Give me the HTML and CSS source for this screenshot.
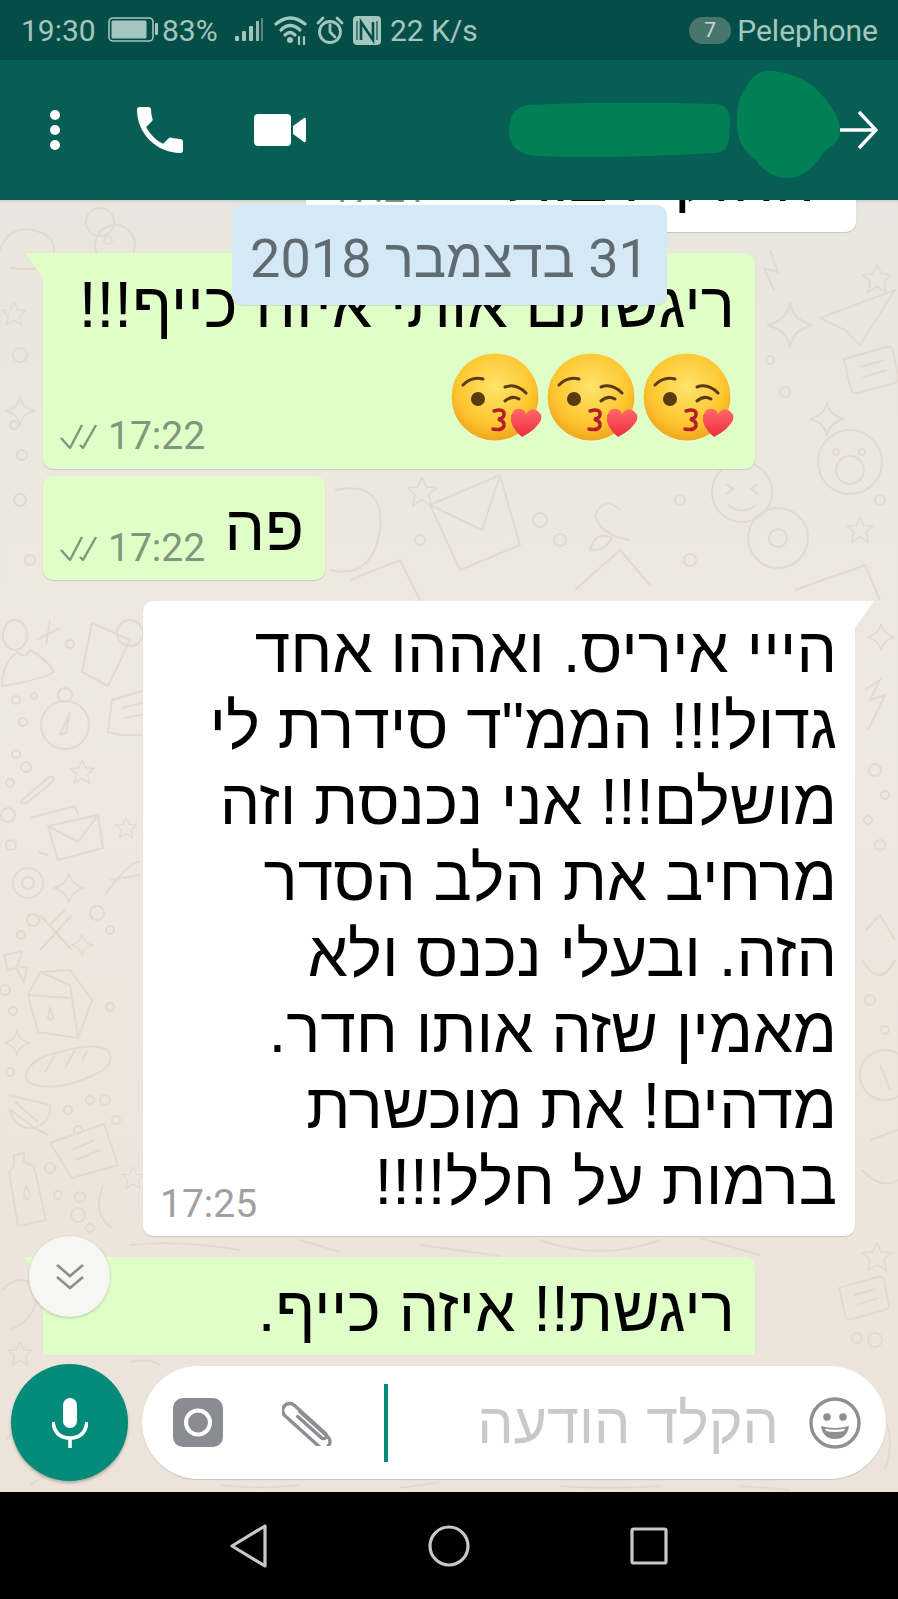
FILE: index.html
```html
<!DOCTYPE html>
<html lang="he">
<head>
  <meta charset="utf-8">
  <link rel="stylesheet" href="styles.css">
</head>
<body>
  <svg class="defs" width="0" height="0">
    <defs>
      <radialGradient id="faceFill" cx="50%" cy="38%" r="62%">
        <stop offset="0" stop-color="#ffe36a"/>
        <stop offset="0.7" stop-color="#fdc62f"/>
        <stop offset="1" stop-color="#f3a41c"/>
      </radialGradient>
      <linearGradient id="heartFill" x1="0" y1="0" x2="0" y2="1">
        <stop offset="0" stop-color="#ff6a6a"/>
        <stop offset="1" stop-color="#ee2d3d"/>
      </linearGradient>
      <symbol id="kiss" viewBox="0 0 92 90">
        <circle cx="44" cy="45" r="43.500" fill="url(#faceFill)"/>
        <path d="M12 33 Q21 24 32 27" fill="none" stroke="#5b3b12" stroke-width="3" stroke-linecap="round"/>
        <path d="M54 35 Q65 31 75 41" fill="none" stroke="#5b3b12" stroke-width="3" stroke-linecap="round"/>
        <path d="M54 49 Q61 43 68 47" fill="none" stroke="#5b3b12" stroke-width="3" stroke-linecap="round"/>
        <circle cx="27" cy="47" r="7" fill="#5b3b12"/>
        <path d="M43 59 Q54 56 53 63 Q52 67 47 67 Q54 69 53 74 Q51 79 42 77" fill="none" stroke="#b3202c" stroke-width="3.500" stroke-linecap="round"/>
        <path d="M71 85 Q58 74 60 64 Q63 55 70 57 Q74 58 75 62 Q79 56 85 58 Q92 62 90 68 Q86 77 71 85 Z" fill="url(#heartFill)"/>
      </symbol>
      <symbol id="ticks" viewBox="0 0 38 25">
        <path d="M1 14 L10 24 L22 1 M20 21 L23 24 L36 1" fill="none" stroke="#82967a" stroke-width="2.400" stroke-linejoin="round"/>
      </symbol>
      <symbol id="star5" viewBox="0 0 40 40" overflow="visible">
        <path d="M20 3 L25 14 L37 15 L28 23 L31 36 L20 29 L9 36 L12 23 L3 15 L15 14 Z" stroke-linejoin="round"/>
      </symbol>
      <symbol id="star4" viewBox="0 0 40 40" overflow="visible">
        <path d="M20 2 Q22 16 38 20 Q22 24 20 38 Q18 24 2 20 Q18 16 20 2 Z"/>
      </symbol>
      <symbol id="card" viewBox="0 0 60 50" overflow="visible">
        <path d="M4 14 L46 2 Q52 1 53 6 L58 32 Q59 36 54 38 L18 48 Q13 49 11 45 Z"/>
        <path d="M20 22 L44 15 M23 32 L47 25"/>
      </symbol>
    </defs>
  </svg>

  <div class="screen">
    <div class="status-bar">
      <span class="clock">19:30</span>
      <svg class="ic-battery" width="50" height="26" viewBox="0 0 50 26">
        <rect x="1" y="1" width="44" height="23" rx="4" fill="none" stroke="#a3c6bf" stroke-width="1.600"/>
        <rect x="3.500" y="3.500" width="35" height="18" rx="1.500" fill="#a3c6bf"/>
        <rect x="47" y="6" width="3" height="12" rx="1" fill="#a3c6bf"/>
      </svg>
      <span class="battery-pct">83%</span>
      <svg class="ic-signal" width="28" height="24" viewBox="0 0 28 24" fill="#a3c6bf">
        <rect x="0" y="18" width="4" height="5" rx="1"/>
        <rect x="7" y="13" width="4" height="10" rx="1"/>
        <rect x="14" y="8" width="4" height="15" rx="1"/>
        <rect x="21" y="3" width="3" height="20" opacity="0.9"/>
        <rect x="26" y="0" width="2" height="23" opacity="0.5"/>
      </svg>
      <svg class="ic-wifi" width="33" height="30" viewBox="0 0 33 30" fill="none" stroke="#a3c6bf" stroke-width="3.200" stroke-linecap="round">
        <path d="M2 9 Q16 -3 31 9"/>
        <path d="M7 15 Q16 6 26 15"/>
        <path d="M11 20 Q16 15 21 20"/>
        <circle cx="16" cy="25" r="3" fill="#a3c6bf" stroke="none"/>
        <path d="M25 22 L25 29 M30 22 L30 29" stroke-width="2.200"/>
      </svg>
      <svg class="ic-alarm" width="28" height="29" viewBox="0 0 28 29" fill="none" stroke="#a3c6bf" stroke-width="2.800">
        <circle cx="14" cy="16" r="10.500"/>
        <path d="M14 9 V16 L19 21" stroke-linecap="round"/>
        <path d="M2 7 L7 2 M26 7 L21 2" stroke-linecap="round"/>
      </svg>
      <svg class="ic-nfc" width="28" height="29" viewBox="0 0 28 29">
        <rect width="28" height="29" rx="4" fill="#a3c6bf"/>
        <path d="M8 24 V6 L20 24 V6" fill="none" stroke="#054e47" stroke-width="2.600"/>
        <path d="M4 5 V24 M24 5 V24" fill="none" stroke="#054e47" stroke-width="1.200"/>
      </svg>
      <span class="speed">22 K/s</span>
      <span class="sim-badge">7</span>
      <span class="carrier">Pelephone</span>
    </div>

    <div class="top-bar">
      <svg class="ic-dots" width="12" height="40" viewBox="0 0 12 40" fill="#fff">
        <circle cx="6" cy="5" r="5"/>
        <circle cx="6" cy="20" r="5"/>
        <circle cx="6" cy="35" r="5"/>
      </svg>
      <svg class="ic-phone" width="46" height="46" viewBox="3 3 18 18" fill="#fff">
        <path d="M6.62 10.79c1.44 2.83 3.76 5.14 6.59 6.59l2.2-2.2c.27-.27.67-.36 1.02-.24 1.12.37 2.33.57 3.57.57.55 0 1 .45 1 1V20c0 .55-.45 1-1 1-9.39 0-17-7.61-17-17 0-.55.45-1 1-1h3.5c.55 0 1 .45 1 1 0 1.25.2 2.45.57 3.57.11.35.03.74-.25 1.02l-2.2 2.2z"/>
      </svg>
      <svg class="ic-video" width="52" height="32" viewBox="0 0 52 32" fill="#fff">
        <rect width="37" height="32" rx="4"/>
        <path d="M39 12 L50 4 Q52 3 52 6 V26 Q52 29 50 28 L39 20 Z"/>
      </svg>
      <svg class="redaction" width="331" height="107" viewBox="0 0 331 107" fill="#008054">
        <path d="M20 34 Q100 30 205 33 Q221 33 221 50 L220 68 Q218 82 204 82 Q100 88 30 85 Q0 84 0 60 Q0 36 20 34 Z"/>
        <path d="M258 0 C280 0 298 8 310 21 C322 34 331 46 331 60 C331 70 324 74 316 80 C308 92 296 107 278 107 C264 107 252 98 247 89 C236 82 228 70 228 54 C228 40 228 28 236 18 C242 6 250 0 258 0 Z"/>
      </svg>
      <svg class="ic-arrow" width="38" height="40" viewBox="0 0 38 40" fill="none" stroke="#fff" stroke-width="3.400">
        <path d="M0 20 H36 M19 2 L36 20 L19 38"/>
      </svg>
    </div>

    <div class="chat">
      <svg class="doodles" width="898" height="1292" viewBox="0 200 898 1292" fill="none" stroke="#e2dad0" stroke-width="2">
        <path d="M0 250 Q10 222 40 232 Q60 240 52 262 Q40 272 10 268"/>
        <circle cx="100" cy="222" r="14"/><circle cx="115" cy="245" r="20"/><circle cx="108" cy="240" r="4"/>
        <use href="#star5" x="0" y="300" width="28" height="28"/>
        <use href="#star5" x="860" y="262" width="34" height="34"/>
        <use href="#star4" x="765" y="300" width="50" height="50"/>
        <use href="#star4" x="808" y="400" width="38" height="38"/>
        <use href="#star4" x="4" y="395" width="32" height="32"/>
        <path d="M820 318 L895 290 L860 345 L845 330 Z"/>
        <use href="#card" x="840" y="345" width="60" height="50"/>
        <circle cx="850" cy="462" r="32"/><circle cx="850" cy="470" r="14"/><circle cx="836" cy="452" r="3"/><circle cx="862" cy="452" r="3"/>
        <path d="M770 250 l8 22 -14 -4 10 22"/>
        <circle cx="785" cy="392" r="5"/><circle cx="770" cy="360" r="4"/><circle cx="20" cy="355" r="7"/><circle cx="14" cy="425" r="4"/>
        <circle cx="20" cy="500" r="6"/><circle cx="22" cy="455" r="5"/><circle cx="30" cy="560" r="5"/>

        <path d="M430 505 L500 475 L520 545 L460 570 Z M430 505 L482 530 L500 475"/>
        <use href="#star5" x="405" y="475" width="34" height="34"/>
        <path d="M335 490 Q385 480 380 530 Q372 580 330 570"/>
        <path d="M590 550 Q596 530 612 538 Q604 552 590 550 Z M575 590 L620 550 L650 585"/>
        <circle cx="742" cy="492" r="30"/><path d="M726 484 l7 5 -7 5 M758 484 l-7 5 7 5 M728 505 Q742 516 756 505"/>
        <circle cx="778" cy="538" r="30"/><circle cx="778" cy="538" r="9"/>
        <path d="M620 510 Q605 495 595 515 Q600 535 630 540"/>
        <path d="M795 590 L865 565 L880 600"/>
        <use href="#star5" x="845" y="515" width="30" height="30"/>
        <circle cx="540" cy="520" r="7"/><circle cx="560" cy="540" r="6"/><circle cx="420" cy="540" r="5"/><circle cx="690" cy="560" r="6"/><circle cx="680" cy="500" r="5"/><circle cx="880" cy="500" r="5"/>
        <path d="M350 580 L400 560 L420 600"/>

        <ellipse cx="15" cy="635" rx="12" ry="15"/>
        <path d="M2 686 Q2 662 18 652 Q25 660 30 650 Q46 658 54 672 Q40 680 2 686 Z"/>
        <path d="M36 640 L60 628 M50 620 L46 645"/>
        <path d="M92 623 L130 640 L108 686 L82 672 Z"/>
        <circle cx="130" cy="633" r="13"/>
        <circle cx="65" cy="725" r="24"/><circle cx="65" cy="695" r="7"/><path d="M70 712 L60 735 M70 712 L66 733 L60 735"/>
        <path d="M112 700 L145 690 L145 735 L120 735 L108 732 Z M122 708 L145 702 M124 718 L145 714"/>
        <circle cx="16" cy="700" r="4"/><circle cx="34" cy="696" r="3"/><circle cx="23" cy="722" r="4"/><circle cx="16" cy="754" r="4"/><circle cx="26" cy="767" r="5"/><circle cx="10" cy="783" r="4"/><circle cx="70" cy="644" r="4"/>
        <path d="M22 800 L48 778 Q56 774 52 782 L28 802 Q20 806 22 800 Z"/>
        <use href="#star5" x="68" y="758" width="28" height="28"/>
        <use href="#star5" x="114" y="816" width="24" height="24"/>
        <path d="M30 818 L75 806 L78 815 M38 852 L48 855"/>
        <path d="M48 826 L98 815 L103 848 L58 860 Z M48 826 L78 842 L98 815"/>
        <circle cx="8" cy="815" r="7"/><circle cx="11" cy="845" r="5"/>
        <circle cx="28" cy="883" r="15"/><circle cx="28" cy="883" r="6"/>
        <use href="#star4" x="52" y="870" width="34" height="36"/>
        <path d="M105 895 Q130 860 140 862 M110 880 L140 875"/>

        <path d="M40 915 L72 950 M72 915 L40 950 M50 925 L65 910"/>
        <circle cx="33" cy="920" r="6"/><circle cx="97" cy="913" r="7"/><circle cx="21" cy="935" r="4"/><circle cx="110" cy="930" r="4"/>
        <use href="#star4" x="70" y="932" width="24" height="26"/>
        <path d="M4 955 L22 951 L17 966 L27 968 L24 982 L16 968 L8 970 Z"/>
        <path d="M28 995 L40 972 L70 970 L92 1000 L78 1038 L38 1032 Z M40 972 L70 985 L78 1038 M28 995 L70 998"/>
        <path d="M48 1018 Q49 1010 50 1008 Q53 1014 53 1018 Q50 1022 48 1018 Z"/>
        <circle cx="5" cy="990" r="5"/><circle cx="13" cy="1011" r="4"/><circle cx="110" cy="1007" r="4"/>
        <use href="#star4" x="3" y="1028" width="28" height="30"/>
        <circle cx="10" cy="1072" r="4"/>
        <path d="M26 1075 Q30 1058 60 1052 Q90 1042 108 1050 Q116 1062 100 1072 Q60 1092 35 1085 Q25 1082 26 1075 Z M45 1072 L55 1055 M65 1068 L75 1050 M82 1060 L88 1050"/>
        <path d="M9 1095 L50 1105 Q52 1120 35 1128 L48 1135 M35 1128 Q15 1130 10 1110 Z M15 1102 L38 1122"/>
        <path d="M50 1143 L104 1124 L118 1165 L72 1178 Z M72 1150 L95 1140 M76 1160 L100 1150"/>
        <circle cx="68" cy="1110" r="4"/><circle cx="90" cy="1100" r="4"/><circle cx="105" cy="1100" r="5"/><circle cx="116" cy="1120" r="4"/><circle cx="78" cy="1130" r="4"/>
        <path d="M14 1166 L14 1155 L24 1153 L24 1162 L34 1166 L46 1220 L18 1226 L9 1172 Z"/>
        <path d="M24 1196 Q25 1188 26 1186 Q30 1192 30 1197 Q27 1202 24 1196 Z"/>
        <circle cx="50" cy="1168" r="5"/><circle cx="58" cy="1195" r="4"/><circle cx="80" cy="1197" r="5"/><circle cx="78" cy="1215" r="7"/><circle cx="90" cy="1228" r="4"/>
        <path d="M103 1185 Q92 1215 112 1228"/>
        <use href="#star5" x="120" y="1165" width="26" height="26"/>

        <use href="#star4" x="866" y="620" width="30" height="34"/>
        <path d="M865 690 L880 680 L870 700 L885 695 L868 730"/>
        <circle cx="875" cy="770" r="6"/><circle cx="885" cy="795" r="4"/><circle cx="868" cy="820" r="4"/><circle cx="880" cy="845" r="5"/>
        <path d="M866 930 L880 915 L895 940 M862 960 Q880 990 895 960"/>
        <circle cx="870" cy="1000" r="5"/><circle cx="885" cy="1030" r="4"/>
        <circle cx="885" cy="1075" r="25"/><path d="M880 1065 L890 1090"/>
        <path d="M870 1140 L898 1130 M862 1170 Q880 1190 898 1180"/>
        <use href="#star5" x="860" y="1240" width="34" height="34"/>
        <use href="#card" x="835" y="1275" width="56" height="46"/>
        <circle cx="875" cy="1340" r="7"/><circle cx="857" cy="1338" r="5"/>
        <path d="M130 1245 Q180 1240 240 1250 M300 1240 L340 1252 M420 1245 L500 1256 M540 1240 Q600 1262 660 1240 M700 1238 L760 1255"/>
        <path d="M2 1290 Q20 1270 40 1290 Q35 1320 10 1330"/>
        <use href="#star5" x="6" y="1340" width="28" height="28"/>
        <path d="M6 1440 Q30 1410 60 1440 Q60 1470 30 1485"/>
        <path d="M130 1362 Q150 1358 160 1365 M220 1485 Q260 1490 300 1485 M400 1488 L440 1482 M560 1486 Q600 1490 660 1486 M740 1486 L790 1490 M885 1420 Q895 1440 885 1470"/>
      </svg>

      <div class="scroll">
        <div class="bubble bubble-in clipped-top">
          <div class="line-row">
            <span class="text">החזקי רבות</span>
            <span class="meta meta-clip">17:21</span>
          </div>
        </div>
        <div class="bubble bubble-out bubble-wide has-tail">
          <div class="text">ריגשתם אותי איזה כייף!!!</div>
          <div class="line-row emoji-row">
            <div class="emojis">
              <svg class="emoji"><use href="#kiss"/></svg>
              <svg class="emoji"><use href="#kiss"/></svg>
              <svg class="emoji"><use href="#kiss"/></svg>
            </div>
            <span class="meta meta-out">17:22 <svg class="ticks"><use href="#ticks"/></svg></span>
          </div>
        </div>
        <div class="bubble bubble-out bubble-short">
          <div class="line-row">
            <span class="text">פה</span>
            <span class="meta meta-out">17:22 <svg class="ticks"><use href="#ticks"/></svg></span>
          </div>
        </div>
        <div class="bubble bubble-in bubble-long has-tail">
          <div class="text">הייי איריס. ואההו אחד</div>
          <div class="text">גדול!!! הממ"ד סידרת לי</div>
          <div class="text">מושלם!!! אני נכנסת וזה</div>
          <div class="text">מרחיב את הלב הסדר</div>
          <div class="text">הזה. ובעלי נכנס ולא</div>
          <div class="text">מאמין שזה אותו חדר.</div>
          <div class="text">מדהים! את מוכשרת</div>
          <div class="line-row">
            <span class="text">ברמות על חלל!!!!</span>
            <span class="meta">17:25</span>
          </div>
        </div>
        <div class="bubble bubble-out bubble-wide has-tail">
          <div class="text">ריגשת!! איזה כייף.</div>
          <div class="text">אני מאושרת לשמוע</div>
        </div>
      </div>

      <div class="date-chip">31 בדצמבר 2018</div>

      <div class="scroll-down">
        <svg width="30" height="28" viewBox="0 0 30 28" fill="none" stroke="#8d8f8c" stroke-width="2.600">
          <path d="M2 2 L15 13 L28 2 M2 14 L15 25 L28 14"/>
        </svg>
      </div>

      <div class="composer">
        <div class="mic-btn">
          <svg width="36" height="50" viewBox="0 0 36 50" fill="none" stroke="#fff" stroke-width="3.600">
            <rect x="11" y="0" width="14" height="30" rx="7" fill="#fff" stroke="none"/>
            <path d="M1 24 Q3 40 18 40 Q33 40 35 24"/>
            <path d="M18 40 V50"/>
          </svg>
        </div>
        <div class="input-pill">
          <svg class="ic-camera" width="50" height="49" viewBox="0 0 50 49">
            <rect width="50" height="49" rx="10" fill="#8a8c91"/>
            <circle cx="25" cy="24.500" r="12" fill="none" stroke="#fff" stroke-width="4"/>
          </svg>
          <svg class="ic-clip" width="52" height="46" viewBox="0 0 52 46" fill="none" stroke="#8f8f93" stroke-width="3.400" stroke-linecap="round">
            <path transform="rotate(42 26 23)" d="M12 20 H50 a6.500 6.500 0 0 1 0 13 H4 a7 7 0 0 1 0 -14 H46 a3 3 0 0 1 0 6 H14"/>
          </svg>
          <div class="cursor"></div>
          <div class="placeholder">הקלד הודעה</div>
          <svg class="ic-smile" width="52" height="52" viewBox="0 0 52 52">
            <circle cx="26" cy="26" r="24" fill="none" stroke="#8f8f93" stroke-width="3.400"/>
            <circle cx="18" cy="20" r="3.800" fill="#8f8f93"/>
            <circle cx="34" cy="20" r="3.800" fill="#8f8f93"/>
            <path d="M12 29 Q26 33 40 29 Q38 42 26 42 Q14 42 12 29 Z" fill="#8f8f93"/>
            <path d="M16 31.500 Q26 34 36 31.500 L35 34 Q26 36 17 34 Z" fill="#fff"/>
          </svg>
        </div>
      </div>
    </div>

    <div class="nav-bar">
      <div class="nav-cell">
        <svg width="38" height="44" viewBox="0 0 38 44" fill="none" stroke="#c8c8c8" stroke-width="3.200" stroke-linejoin="round">
          <path d="M35 2 V42 L2 22 Z"/>
        </svg>
      </div>
      <div class="nav-cell">
        <svg width="42" height="42" viewBox="0 0 42 42" fill="none" stroke="#c8c8c8" stroke-width="3.200">
          <circle cx="21" cy="21" r="19"/>
        </svg>
      </div>
      <div class="nav-cell">
        <svg width="38" height="38" viewBox="0 0 38 38" fill="none" stroke="#c8c8c8" stroke-width="3.200">
          <rect x="2" y="2" width="34" height="34" rx="1.500"/>
        </svg>
      </div>
    </div>
  </div>
</body>
</html>
```

FILE: styles.css
```css
body {
  margin: 0;
  background: #000;
  font-family: "Liberation Sans", "DejaVu Sans", sans-serif;
}

.defs {
  position: absolute;
}

.screen {
  width: 898px;
  height: 1599px;
  display: flex;
  flex-direction: column;
  overflow: hidden;
}

/* status bar */
.status-bar {
  height: 60px;
  background: #054e47;
  color: #a3c6bf;
  display: flex;
  align-items: center;
  padding: 0 20px 0 21px;
  font-family: Roboto, sans-serif;
  font-size: 30px;
  box-sizing: border-box;
}

.clock {
  width: 87px;
}

.battery-pct {
  margin-left: 4px;
  width: 64px;
}

.ic-signal {
  margin-left: 9px;
}

.ic-wifi {
  margin-left: 11px;
}

.ic-alarm {
  margin-left: 9px;
}

.ic-nfc {
  margin-left: 9px;
}

.speed {
  margin-left: 9px;
}

.sim-badge {
  margin-left: auto;
  width: 42px;
  height: 27px;
  line-height: 27px;
  border-radius: 14px;
  background: #48766e;
  color: #c8dbd6;
  text-align: center;
  font-size: 21px;
}

.carrier {
  margin-left: 6px;
}

/* header */
.top-bar {
  height: 140px;
  background: #075e55;
  display: flex;
  align-items: center;
  padding-left: 49px;
  box-sizing: border-box;
}

.ic-phone {
  margin-left: 76px;
}

.ic-video {
  margin-left: 71px;
}

.redaction {
  margin-left: 203px;
  margin-bottom: 11px;
  flex: none;
}

/* chat */
.chat {
  position: relative;
  flex: 1;
  background: linear-gradient(#e9e6df, #efe8e0 40%, #ece4da);
  box-shadow: inset 0 3px 3px -2px rgba(0, 0, 0, 0.15);
}

.doodles {
  position: absolute;
  top: 0;
  left: 0;
}

.scroll {
  position: relative;
  height: 1155px;
  overflow: hidden;
}

.bubble {
  position: relative;
  box-sizing: border-box;
  border-radius: 10px;
  box-shadow: 0 1px 1px rgba(0, 0, 0, 0.14);
  padding: 0 20px 0 0;
  direction: rtl;
}

.bubble-in {
  background: #fff;
  color: #000;
}

.bubble-out {
  background: #dffec8;
}

.has-tail::before {
  content: "";
  position: absolute;
  top: 0;
  width: 20px;
  height: 28px;
}

.bubble-out.has-tail {
  border-top-left-radius: 0;
}

.bubble-out.has-tail::before {
  left: -18px;
  background: #dffec8;
  clip-path: polygon(0 0, 100% 0, 100% 100%);
}

.bubble-in.has-tail {
  border-top-right-radius: 0;
}

.bubble-in.has-tail::before {
  right: -19px;
  background: #fff;
  clip-path: polygon(0 0, 100% 0, 0 100%);
}

.text {
  font-size: 64px;
  line-height: 76px;
  color: #000;
  white-space: nowrap;
}

.line-row {
  display: flex;
  justify-content: space-between;
  align-items: flex-end;
}

.meta {
  direction: ltr;
  font-family: Roboto, sans-serif;
  font-size: 39px;
  line-height: 40px;
  color: #a0a0a0;
  white-space: nowrap;
  display: flex;
  flex-direction: row-reverse;
  align-items: center;
  gap: 10px;
  margin-left: 17px;
  margin-bottom: -4px;
}

.meta-out {
  color: #81957a;
}

.ticks {
  width: 38px;
  height: 25px;
}

.clipped-top {
  width: 550px;
  height: 60px;
  margin: -28px 0 0 306px;
  padding-right: 41px;
  overflow: hidden;
}

.clipped-top .line-row {
  margin-top: -31px;
}

.meta-clip {
  color: #888;
  margin-left: 24px;
  margin-bottom: 8px;
}

.bubble-wide {
  width: 712px;
  margin-left: 43px;
}

.bubble-short {
  width: 282px;
  margin: 7px 0 0 43px;
  height: 104px;
  padding-top: 14px;
  padding-right: 21px;
}

.bubble-short .meta {
  margin-bottom: -2px;
}

.bubble-long {
  width: 712px;
  margin: 21px 0 0 143px;
  padding-top: 11px;
  padding-right: 18px;
  padding-bottom: 16px;
}

.scroll > .bubble-wide {
  margin-top: 21px;
  padding-top: 14px;
  padding-bottom: 19px;
}

.emoji-row {
  margin-top: 9px;
}

.emoji-row .meta {
  margin-bottom: -6px;
}

.emojis {
  display: flex;
  flex-direction: row-reverse;
  gap: 4px;
  margin-bottom: 8px;
}

.emoji {
  width: 92px;
  height: 90px;
}

.date-chip {
  position: absolute;
  top: 5px;
  left: 232px;
  width: 435px;
  height: 100px;
  line-height: 108px;
  border-radius: 10px;
  background: #d4e9f5;
  color: #5f6b70;
  text-align: center;
  direction: rtl;
  font-family: Roboto, "Liberation Sans", sans-serif;
  font-size: 54px;
  box-shadow: 0 1px 1px rgba(0, 0, 0, 0.1);
}

.scroll-down {
  position: absolute;
  left: 29px;
  top: 1036px;
  width: 81px;
  height: 81px;
  border-radius: 50%;
  background: #f6f6f3;
  box-shadow: 0 1px 3px rgba(0, 0, 0, 0.2);
  display: flex;
  align-items: center;
  justify-content: center;
}

/* composer */
.composer {
  position: relative;
  height: 137px;
  display: flex;
  align-items: center;
  padding: 0 12px 2px 11px;
  gap: 14px;
  box-sizing: border-box;
}

.mic-btn {
  width: 117px;
  height: 117px;
  flex: none;
  border-radius: 50%;
  background: #058b7a;
  display: flex;
  align-items: center;
  justify-content: center;
  box-shadow: 0 2px 3px rgba(0, 0, 0, 0.25);
}

.input-pill {
  flex: 1;
  height: 113px;
  border-radius: 57px;
  background: #fff;
  display: flex;
  align-items: center;
  padding: 0 25px 0 31px;
  box-shadow: 0 1px 1px rgba(0, 0, 0, 0.15);
}

.ic-clip {
  margin-left: 59px;
}

.cursor {
  width: 4px;
  height: 78px;
  background: #058b7a;
  margin-left: 50px;
}

.placeholder {
  flex: 1;
  direction: rtl;
  font-size: 57.500px;
  color: #c9c9c9;
  margin-right: 30px;
  white-space: nowrap;
}

/* nav */
.nav-bar {
  height: 107px;
  background: #000;
  display: flex;
  justify-content: center;
  align-items: center;
  box-sizing: border-box;
}

.nav-cell {
  width: 200px;
  display: flex;
  justify-content: center;
}
```
